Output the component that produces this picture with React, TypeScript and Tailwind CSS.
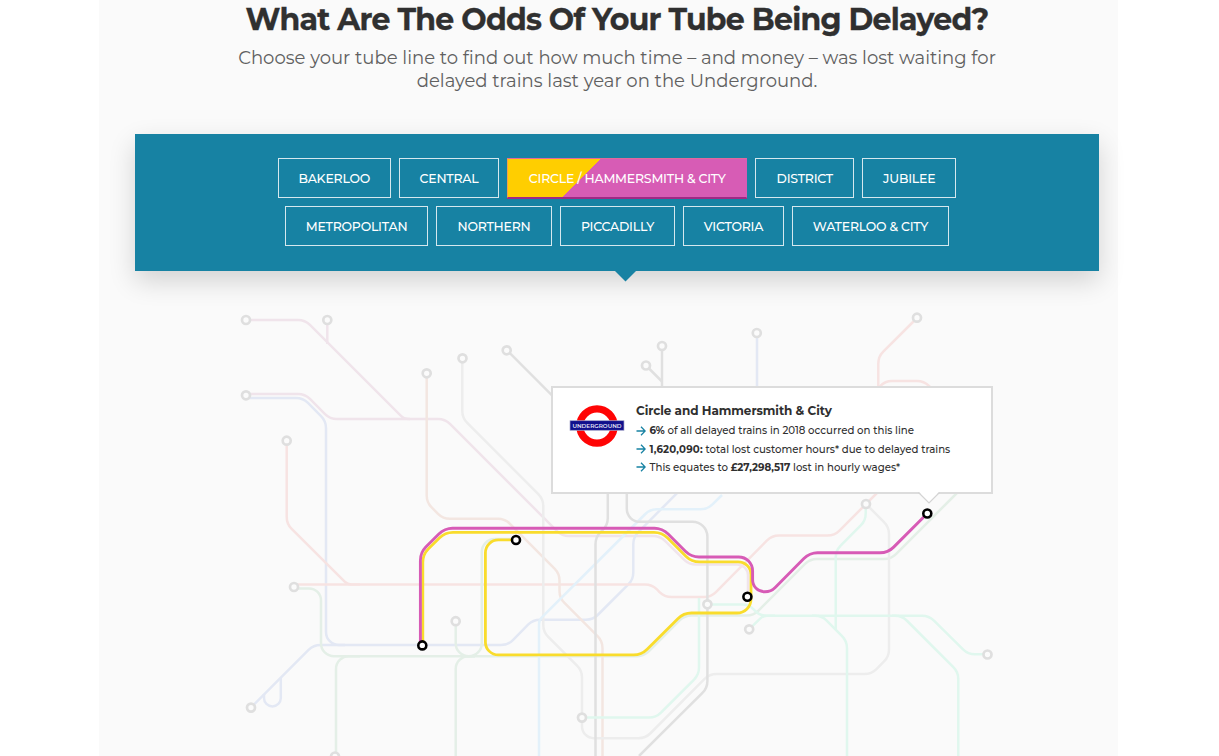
import React from "react";

type Pt = [number, number, number?];

// Builds a polyline whose inner corners are rounded; a third value sets the corner's cut length.
function route(points: Pt[], cut = 7): string {
  let d = `M${points[0][0]} ${points[0][1]}`;
  for (let i = 1; i < points.length - 1; i++) {
    const [px, py] = points[i - 1];
    const [x, y, own] = points[i];
    const [nx, ny] = points[i + 1];
    const a = Math.hypot(px - x, py - y);
    const b = Math.hypot(nx - x, ny - y);
    const c = Math.min(own ?? cut, a, b);
    const ax = x + ((px - x) * c) / a;
    const ay = y + ((py - y) * c) / a;
    const bx = x + ((nx - x) * c) / b;
    const by = y + ((ny - y) * c) / b;
    const k = 0.56;
    d += `L${ax} ${ay}C${ax + (x - ax) * k} ${ay + (y - ay) * k} ${bx + (x - bx) * k} ${by + (y - by) * k} ${bx} ${by}`;
  }
  const end = points[points.length - 1];
  return d + `L${end[0]} ${end[1]}`;
}

const faded: { color: string; points: Pt[] }[] = [
  { color: "#f0e4eb", points: [[246, 320], [305, 320], [404, 419, 5], [445, 419], [562, 536], [660, 536], [689, 564.5], [748, 564.5, 11], [748, 597]] },
  { color: "#f0e4eb", points: [[327.3, 320], [327.3, 344]] },
  { color: "#f0e4eb", points: [[246, 394], [305, 394], [330, 419], [410, 419]] },
  { color: "#e3e8f4", points: [[246, 398], [303, 398], [326, 421], [326, 645, 13], [345, 645]] },
  { color: "#e3e8f4", points: [[251, 707.5], [313.5, 645], [508, 645], [533, 619.7], [593, 619.7], [633.3, 579.5], [633.3, 537], [757, 413], [757, 333]] },
  { color: "#f7e3e2", points: [[286.7, 440], [286.7, 524], [347.5, 584.5, 4], [360, 584.5]] },
  { color: "#f7e3e2", points: [[294, 584.5], [652, 584.5], [664.5, 597], [711, 597], [772, 535.5], [834.5, 535.5], [882, 488]] },
  { color: "#f7e3e2", points: [[917, 318], [878.3, 356.5], [878.3, 390]] },
  { color: "#f7e3e2", points: [[878.3, 388], [885, 381], [924, 381], [932, 389]] },
  { color: "#e4efe7", points: [[294, 588.4], [321, 588.4, 12], [321, 656.2, 13], [644, 656.2], [684.5, 615.5], [753.5, 615.5], [810, 559], [891, 559], [960, 490]] },
  { color: "#e4efe7", points: [[336, 756], [336, 656.2, 13], [360, 656.2]] },
  { color: "#e4efe7", points: [[455.7, 621], [455.7, 656.2, 13], [475, 656.2]] },
  { color: "#e4efe7", points: [[455.7, 756], [455.7, 656.2, 13], [475, 656.2]] },
  { color: "#e4efe7", points: [[516, 539], [481.8, 539, 13], [481.8, 656.2, 13], [466, 656.2]] },
  { color: "#f3e6e1", points: [[426.7, 373], [426.7, 502.5], [443, 518.8], [505, 518.8], [559.5, 573.5], [559.5, 598], [602.5, 641], [602.5, 756]] },
  { color: "#ededed", points: [[462.3, 358], [462.3, 418], [543.3, 499], [543.3, 632], [582, 670.5], [582, 738.2, 12], [645.5, 738.2], [709.5, 674], [871.5, 674], [889, 656.5], [889, 527], [866, 504]] },
  { color: "#e3f1fa", points: [[722, 495], [707.5, 509.3], [650, 509.3], [539, 620.3, 4], [539, 756]] },
  { color: "#e0e0e0", points: [[506.7, 350], [556, 399.3]] },
  { color: "#e0e0e0", points: [[662, 346], [662, 390]] },
  { color: "#e0e0e0", points: [[646, 365.5], [662, 381.5]] },
  { color: "#e0e0e0", points: [[607.8, 490], [607.8, 525], [595.5, 537], [595.5, 756]] },
  { color: "#e0e0e0", points: [[626.8, 490], [626.8, 521.8, 13], [707.4, 521.8, 15], [707.4, 688], [639, 756]] },
  { color: "#e0f7ee", points: [[707.4, 604.5], [749, 604.5], [760, 615.8], [929, 615.8], [968, 654.3], [987, 654.3]] },
  { color: "#e0f7ee", points: [[749, 629.3], [763, 615.8, 4], [775, 615.8]] },
  { color: "#e0f7ee", points: [[812, 615.8], [822, 615.8], [847, 641], [847, 756]] },
  { color: "#e0f7ee", points: [[892, 615.8], [902, 615.8], [958.3, 672], [958.3, 756]] },
  { color: "#e0f7ee", points: [[865.7, 504], [865.7, 520.5], [835.7, 550.5], [835.7, 629]] },
  { color: "#e0f7ee", points: [[582, 717.6], [656, 717.6], [699, 674.6], [699, 598]] },
];

const fadedStops: [number, number][] = [
  [246, 320], [327.3, 320], [246, 395.3], [426.7, 373.3], [462.5, 358.3], [506.7, 350.3], [286.7, 440.7],
  [662, 346], [646, 365.5], [756.8, 333], [917, 317.7], [866, 504], [294, 587], [251, 707.6], [455.7, 621.2],
  [335, 756.5], [582, 717.6], [707.4, 604.3], [749.2, 629.3], [987.5, 654.5],
];

const activeStops: [number, number][] = [[422.3, 645.4], [516, 540], [747.4, 596.8], [927.3, 513.5]];

function TubeMap() {
  return (
    <svg className="block h-[485px] w-full" viewBox="99 271 1019 485" fill="none">
      {faded.map((l, i) => (
        <path key={i} d={route(l.points)} stroke={l.color} strokeWidth="2.5" />
      ))}
      <path d="M280.8 678V698A8.4 8.4 0 0 1 264 698V694" stroke="#e3e8f4" strokeWidth="2.5" />
      {fadedStops.map(([x, y], i) => (
        <circle key={i} cx={x} cy={y} r="4" fill="#fbfbfb" stroke="#dfdfdf" strokeWidth="2.7" />
      ))}
      <path
        d={route([[422.8, 643], [422.8, 554.5], [445, 532.3], [662, 532.3], [691.5, 561.8], [751, 561.8, 13], [751, 613, 14], [683.5, 613], [641.5, 654.9], [485.4, 654.9, 13], [485.4, 539.9, 13], [516, 539.9]], 8)}
        stroke="#f9dc2c"
        strokeWidth="2.8"
      />
      <path
        d={route([[420.4, 642], [420.4, 552.5], [444.5, 528.3], [662.5, 528.3], [691, 557], [752.6, 557, 14], [752.6, 591.8, 12], [771, 591.8, 6], [809.5, 552.8], [888, 552.8], [927, 513.8]], 8)}
        stroke="#d75bb6"
        strokeWidth="2.9"
      />
      {activeStops.map(([x, y], i) => (
        <circle key={i} cx={x} cy={y} r="4" fill="#fff" stroke="#000" strokeWidth="2.6" />
      ))}
    </svg>
  );
}

const button =
  "flex h-10 shrink-0 items-center justify-center whitespace-nowrap border pt-[2px] text-[12.5px] font-medium tracking-[-0.22px] text-white";

function LineButton({ label, width, active }: { label: string; width: string; active?: boolean }) {
  return (
    <button
      className={`${button} ${width} ${
        active
          ? "border-b-[#9f2a86] border-l-[#f0a050] border-r-[#d75bb6] border-t-[#e06a9a] bg-[linear-gradient(135deg,#ffce00_0_33.4%,#d75cb5_33.7%)] shadow-[0_1px_0_#9f2a86]"
          : "border-[#d5e8ee]"
      }`}
    >
      {label}
    </button>
  );
}

function Fact({ children }: { children: React.ReactNode }) {
  return (
    <li className="flex h-[18.2px] items-center whitespace-nowrap">
      <svg className="mr-[3.5px] size-[10px]" viewBox="0 0 10 10" fill="none" stroke="#1782a3" strokeWidth="1.3">
        <path d="M.5 5H9M5 .8L9.2 5L5 9.2" />
      </svg>
      <span>{children}</span>
    </li>
  );
}

function Roundel() {
  return (
    <svg className="mt-[16px] h-[44px] w-[56px] shrink-0" viewBox="0 0 56 44">
      <circle cx="28" cy="22" r="17.2" fill="#fff" stroke="#ff0505" strokeWidth="7.3" />
      <rect x="1" y="16.7" width="54" height="9.6" fill="#10108c" stroke="#aaaacb" strokeWidth=".7" />
      <text x="28" y="23.5" textAnchor="middle" textLength="49" lengthAdjust="spacingAndGlyphs" fill="#e4e4f4" fontFamily="Montserrat, Inter, sans-serif" fontSize="5.4" fontWeight="600">
        UNDERGROUND
      </text>
    </svg>
  );
}

export default function App() {
  return (
    <div className="h-[756px] overflow-hidden bg-white font-['Montserrat',Inter,sans-serif]">
      <main className="ml-[99px] h-full w-[1019px] bg-[#fafafa]">
        <header className="h-[134px] pl-[17px] pt-px text-center">
          <h1 className="text-[30px] font-bold leading-[37px] tracking-[-0.74px] text-[#303030] [-webkit-text-stroke:0.3px_#303030]">
            What Are The Odds Of Your Tube Being Delayed?
          </h1>
          <p className="mt-[9px] text-[18.05px] leading-[22.5px] text-[#606060]">
            Choose your tube line to find out how much time – and money – was lost waiting for
            <br />
            delayed trains last year on the Underground.
          </p>
        </header>

        <nav className="relative ml-9 flex h-[137px] w-[964px] flex-col items-center gap-2 bg-[#1782a3] pt-6 shadow-[0_10px_25px_rgba(0,0,0,0.16)]">
          <div className="flex gap-2">
            <LineButton label="BAKERLOO" width="w-[113px]" />
            <LineButton label="CENTRAL" width="w-[100.5px]" />
            <LineButton label="CIRCLE / HAMMERSMITH & CITY" width="w-[240px]" active />
            <LineButton label="DISTRICT" width="w-[99px]" />
            <LineButton label="JUBILEE" width="w-[94px]" />
          </div>
          <div className="flex gap-2">
            <LineButton label="METROPOLITAN" width="w-[143px]" />
            <LineButton label="NORTHERN" width="w-[116px]" />
            <LineButton label="PICCADILLY" width="w-[115px]" />
            <LineButton label="VICTORIA" width="w-[101px]" />
            <LineButton label="WATERLOO & CITY" width="w-[157px]" />
          </div>
          <svg className="absolute left-[479px] top-[136px] h-[12px] w-[23px]" viewBox="0 0 23 12">
            <path d="M0 0H23L11.5 11.5Z" fill="#1782a3" />
          </svg>
        </nav>

        <section className="relative">
          <TubeMap />
          <aside className="absolute left-[452px] top-[115px] flex h-[108px] w-[442px] border-2 border-[#dcdcdc] bg-white pl-[16px] text-[#2f2f2f]">
            <Roundel />
            <div className="ml-[11px] pt-[14px]">
              <h2 className="whitespace-nowrap text-[12px] font-bold leading-[17px] tracking-[-0.06px]">
                Circle and Hammersmith &amp; City
              </h2>
              <ul className="mt-[3px] text-[10.2px] font-medium">
                <Fact>
                  <b>6%</b> of all delayed trains in 2018 occurred on this line
                </Fact>
                <Fact>
                  <b className="tracking-[0.2px]">1,620,090:</b> total lost customer hours* due to delayed trains
                </Fact>
                <Fact>
                  This equates to <b>£27,298,517</b> lost in hourly wages*
                </Fact>
              </ul>
            </div>
            <svg className="absolute left-[364px] top-[103px] h-[14px] w-[24px]" viewBox="0 0 24 14">
              <path d="M1 0L12 11.5L23 0Z" fill="#fff" />
              <path d="M1.5 1.5L12 12L22.5 1.5" fill="none" stroke="#d4d4d4" strokeWidth="1.2" />
            </svg>
          </aside>
        </section>
      </main>
    </div>
  );
}
